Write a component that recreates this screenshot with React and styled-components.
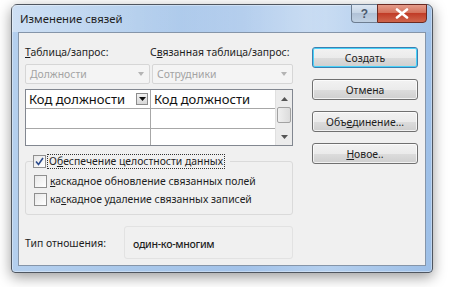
import React from "react"
import styled, { createGlobalStyle } from "styled-components"

const GlobalStyle = createGlobalStyle`
body {
    margin: 0;
    background: #ffffff;
    font-family: 'Noto Sans', 'Open Sans', sans-serif;
}
`

export default function App() {
    return (
        <Stage>
            <GlobalStyle />
            <Window>
                <TitleBar>
                    <Title>Изменение связей</Title>
                    <CaptionButtons>
                        <HelpButton>?</HelpButton>
                        <CloseButton>
                            <svg width="14" height="11" viewBox="0 0 14 11">
                                <path d="M2 1.5 L12 9.5 M12 1.5 L2 9.5" stroke="#fff" strokeWidth="2.6" strokeLinecap="round" />
                            </svg>
                        </CloseButton>
                    </CaptionButtons>
                </TitleBar>

                <Client>
                    <MainColumn>
                        <LabelsRow>
                            <Label><u>Т</u>аблица/запрос:</Label>
                            <Label>С<u>в</u>язанная таблица/запрос:</Label>
                        </LabelsRow>
                        <CombosRow>
                            <Combo>
                                <span>Должности</span>
                                <ComboArrow />
                            </Combo>
                            <Combo>
                                <span>Сотрудники</span>
                                <ComboArrow />
                            </Combo>
                        </CombosRow>

                        <Grid>
                            <GridBody>
                                <GridRow>
                                    <GridCell>
                                        Код должности
                                        <CellDrop>
                                            <svg width="7" height="4" viewBox="0 0 7 4"><path d="M0 0 H7 L3.5 4 Z" fill="#111" /></svg>
                                        </CellDrop>
                                    </GridCell>
                                    <GridCell>Код должности</GridCell>
                                </GridRow>
                                <GridRow>
                                    <GridCell />
                                    <GridCell />
                                </GridRow>
                                <GridRow $last>
                                    <GridCell />
                                    <GridCell />
                                </GridRow>
                            </GridBody>
                            <ScrollBar>
                                <ScrollArrow>
                                    <svg width="7" height="4" viewBox="0 0 7 4"><path d="M0 4 H7 L3.5 0 Z" fill="#555" /></svg>
                                </ScrollArrow>
                                <ScrollThumb />
                                <ScrollTrack />
                                <ScrollArrow>
                                    <svg width="7" height="4" viewBox="0 0 7 4"><path d="M0 0 H7 L3.5 4 Z" fill="#555" /></svg>
                                </ScrollArrow>
                            </ScrollBar>
                        </Grid>

                        <Group>
                            <Legend>
                                <Check>
                                    <svg width="9" height="9" viewBox="0 0 9 9">
                                        <path d="M1 4.5 L3.5 7.5 L8 1" stroke="#2a4a8c" strokeWidth="1.6" fill="none" />
                                    </svg>
                                </Check>
                                <FocusText>О<u>б</u>еспечение целостности данных</FocusText>
                            </Legend>
                            <CheckRow>
                                <Check />
                                <span><u>к</u>аскадное обновление связанных полей</span>
                            </CheckRow>
                            <CheckRow>
                                <Check />
                                <span>ка<u>с</u>кадное удаление связанных записей</span>
                            </CheckRow>
                        </Group>

                        <RelationRow>
                            <Label>Тип отношения:</Label>
                            <RelationBox>один-ко-многим</RelationBox>
                        </RelationRow>
                    </MainColumn>

                    <ButtonColumn>
                        <Button $default>Создать</Button>
                        <Button>Отмена</Button>
                        <Button>Объ<u>е</u>динение...</Button>
                        <Button><u>Н</u>овое..</Button>
                    </ButtonColumn>
                </Client>
            </Window>
        </Stage>
    )
}

const Stage = styled.div`
width: 455px;
height: 287px;
box-sizing: border-box;
padding: 4px 22px 14px 11px;
background: #ffffff;
`

const Window = styled.div`
box-sizing: border-box;
width: 422px;
height: 269px;
display: flex;
flex-direction: column;
border: 1px solid #4f5660;
border-radius: 6px 6px 4px 4px;
background: linear-gradient(90deg, #b4cfee 0%, #a8c7ea 30%, #a2c2e9 55%, #b4cfee 75%, #9dbfe7 100%);
box-shadow: 0 4px 14px rgba(0, 0, 0, 0.4), inset 0 0 0 1px rgba(255, 255, 255, 0.35);
`

const TitleBar = styled.div`
height: 27px;
display: flex;
align-items: flex-start;
justify-content: space-between;
padding-left: 8px;
background: linear-gradient(90deg, rgba(255,255,255,0.35), rgba(255,255,255,0.1) 40%, rgba(255,255,255,0.3) 70%, rgba(255,255,255,0.05));
`

const Title = styled.div`
margin-top: 6px;
font-size: 11.3px;
color: #1e1e1e;
`

const CaptionButtons = styled.div`
display: flex;
margin-right: 5px;
margin-top: -1px;
`

const HelpButton = styled.div`
width: 26px;
height: 19px;
box-sizing: border-box;
display: flex;
align-items: center;
justify-content: center;
border: 1px solid #6d7d91;
border-right: none;
border-radius: 0 0 0 4px;
background: linear-gradient(180deg, #dde7f3 0%, #c6d5e6 45%, #b1c2d7 50%, #c0d1e3 100%);
color: #4b5a6e;
font-family: 'Liberation Sans', sans-serif;
font-weight: bold;
font-size: 12px;
`

const CloseButton = styled.div`
width: 50px;
height: 19px;
box-sizing: border-box;
display: flex;
align-items: center;
justify-content: center;
border: 1px solid #6b2a22;
border-radius: 0 0 4px 0;
background: linear-gradient(180deg, #e59c8a 0%, #d5735d 45%, #c13c27 50%, #cf654c 100%);
`

const Client = styled.div`
flex: 1;
margin: 0 6px 6px 6px;
border: 1px solid #8595a9;
background: #f0f0f0;
display: flex;
gap: 19px;
padding: 7px 0 0 6px;
font-size: 10.4px;
color: #1e1e1e;
`

const MainColumn = styled.div`
width: 268px;
display: flex;
flex-direction: column;
`

const LabelsRow = styled.div`
display: grid;
grid-template-columns: 125px 1fr;
height: 24px;
align-items: center;
white-space: nowrap;
`

const Label = styled.span`
font-size: 10.4px;
color: #1e1e1e;
white-space: nowrap;
`

const CombosRow = styled.div`
display: grid;
grid-template-columns: 125px 1fr;
gap: 2px;
`

const Combo = styled.div`
height: 20px;
box-sizing: border-box;
display: flex;
align-items: center;
justify-content: space-between;
padding: 0 5px 0 4px;
border: 1px solid #d6d6d6;
border-radius: 2px;
background: #f4f4f4;
color: #a3a3a3;
`

const ComboArrow = styled.span`
width: 0;
height: 0;
border-left: 3.5px solid transparent;
border-right: 3.5px solid transparent;
border-top: 4px solid #b4b4b4;
`

const Grid = styled.div`
margin-top: 5px;
height: 57px;
box-sizing: border-box;
display: flex;
border: 1px solid #828790;
background: #ffffff;
`

const GridBody = styled.div`
flex: 1;
display: flex;
flex-direction: column;
`

const GridRow = styled.div`
display: grid;
grid-template-columns: 124px 1fr;
height: ${p => (p.$last ? "17px" : "19px")};
border-bottom: ${p => (p.$last ? "none" : "1px solid #a7a7a7")};
`

const GridCell = styled.div`
display: flex;
align-items: center;
justify-content: space-between;
padding: 0 2px 0 3px;
font-size: 13px;
color: #111;
& + & {
    border-left: 1px solid #a7a7a7;
}
`

const CellDrop = styled.div`
width: 12px;
height: 12px;
box-sizing: border-box;
display: flex;
align-items: center;
justify-content: center;
border: 1px solid #8c8c8c;
background: linear-gradient(180deg, #f2f2f2, #d9d9d9);
`

const ScrollBar = styled.div`
width: 16px;
display: flex;
flex-direction: column;
background: #ececec;
border-left: 1px solid #e0e0e0;
`

const ScrollArrow = styled.div`
height: 17px;
display: flex;
align-items: center;
justify-content: center;
`

const ScrollThumb = styled.div`
height: 14px;
margin: 0 1px;
border: 1px solid #a2a2a2;
border-radius: 2px;
background: linear-gradient(90deg, #f0f0f0, #dcdcdc);
`

const ScrollTrack = styled.div`
flex: 1;
`

const Group = styled.fieldset`
margin: 9px 0 0 0;
padding: 4px 0 2px 8px;
height: 60px;
box-sizing: border-box;
border: 1px solid #dadada;
border-radius: 3px;
`

const Legend = styled.legend`
display: flex;
align-items: center;
gap: 2px;
padding: 0 6px 0 0;
margin-left: -1px;
font-size: 10.4px;
`

const Check = styled.span`
width: 13px;
height: 13px;
box-sizing: border-box;
display: inline-flex;
align-items: center;
justify-content: center;
border: 1px solid #8f8f8f;
background: linear-gradient(135deg, #e8e8e8, #ffffff);
`

const FocusText = styled.span`
padding: 0 1px;
line-height: 13px;
outline: 1px dotted #333;
`

const CheckRow = styled.div`
display: flex;
align-items: center;
gap: 3px;
height: 18px;
`

const RelationRow = styled.div`
display: grid;
grid-template-columns: 99px 1fr;
align-items: center;
margin-top: 11px;
`

const RelationBox = styled.div`
height: 33px;
box-sizing: border-box;
padding: 10px 8px 0;
border: 1px solid #e2e2e2;
border-radius: 3px;
font-size: 10.5px;
font-weight: 500;
letter-spacing: -0.3px;
color: #1e1e1e;
`

const ButtonColumn = styled.div`
width: 106px;
display: flex;
flex-direction: column;
gap: 11px;
padding-top: 7px;
`

const Button = styled.div`
height: 21px;
box-sizing: border-box;
display: flex;
align-items: center;
justify-content: center;
border: 1px solid ${p => (p.$default ? "#3c7fb1" : "#707070")};
border-radius: 3px;
background: linear-gradient(180deg, #f2f2f2 0%, #ebebeb 50%, #dddddd 51%, #cfcfcf 100%);
box-shadow: inset 0 0 0 1px ${p => (p.$default ? "#48d2f9" : "rgba(255,255,255,0.7)")};
font-size: 10.4px;
color: #1e1e1e;
`
